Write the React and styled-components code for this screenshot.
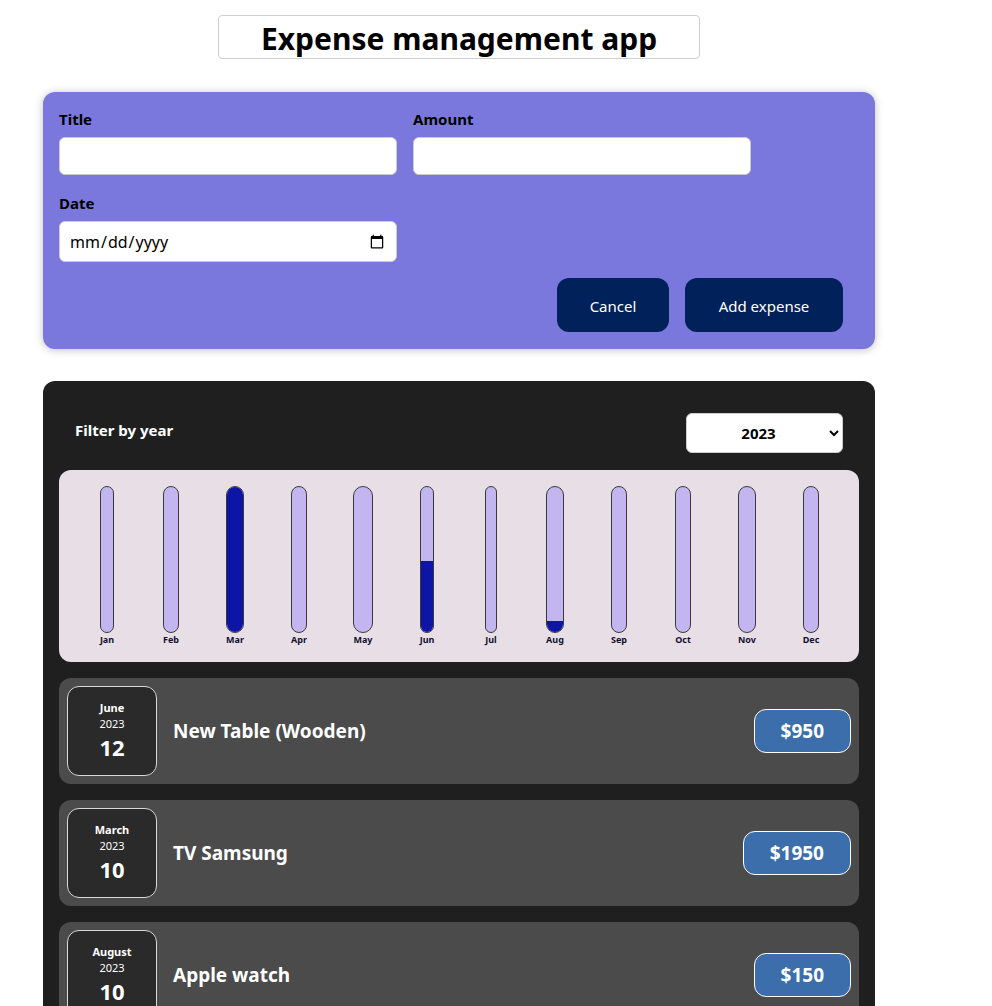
import React from 'react';
import styled, { createGlobalStyle } from 'styled-components';

const GlobalStyle = createGlobalStyle`
  body {
    margin: 0;
    background: #ffffff;
    font-family: "Noto Sans", "Open Sans", sans-serif;
  }
  * { box-sizing: border-box; }
`;

const Page = styled.div`
  width: 832px;
  margin-left: 43px;
  padding-top: 15px;
`;

const TitleBox = styled.h1`
  width: 482px;
  height: 44px;
  margin: 0 auto 33px;
  border: 1px solid #cfcfcf;
  border-radius: 4px;
  display: flex;
  align-items: center;
  justify-content: center;
  font-size: 30px;
  font-weight: 700;
  color: #000;
  padding-top: 3px;
`;

const FormCard = styled.form`
  background: #7a78dd;
  border-radius: 12px;
  box-shadow: 0 1px 8px rgba(0, 0, 0, 0.25);
  padding: 16px 32px 17px 16px;
`;

const Fields = styled.div`
  display: grid;
  grid-template-columns: 338px 338px;
  column-gap: 16px;
  row-gap: 17px;
`;

const Field = styled.div`
  display: flex;
  flex-direction: column;
`;

const Label = styled.label`
  font-weight: 700;
  font-size: 15px;
  color: #000;
  margin-bottom: 7px;
  line-height: 22px;
`;

const Input = styled.input`
  height: ${p => p.$tall ? '41px' : '38px'};
  border: 1px solid #cccccc;
  border-radius: 6px;
  background: #fff;
  font-family: inherit;
  font-size: 16px;
  padding: 0 9px;
  color: #000;
`;

const Actions = styled.div`
  display: flex;
  justify-content: flex-end;
  gap: 16px;
  margin-top: 16px;
`;

const Button = styled.button`
  height: 54px;
  width: ${p => p.$w}px;
  border: none;
  border-radius: 12px;
  background: #002159;
  color: #fff;
  font-family: inherit;
  font-size: 15px;
  padding-top: 2px;
`;

const ListCard = styled.div`
  margin-top: 32px;
  background: #1f1f1f;
  border-radius: 12px;
  padding: 32px 16px 16px;
  display: flex;
  flex-direction: column;
  gap: 16px;
`;

const FilterRow = styled.div`
  display: flex;
  justify-content: space-between;
  align-items: center;
  padding: 0 16px;
  margin-bottom: 1px;
`;

const FilterLabel = styled.span`
  color: #fff;
  font-weight: 700;
  font-size: 15px;
  margin-top: -6px;
`;

const YearSelect = styled.select`
  width: 157px;
  height: 40px;
  border-radius: 6px;
  border: 1px solid #ccc;
  background: #fff;
  font-family: inherit;
  font-weight: 700;
  font-size: 15px;
  text-align: center;
  text-align-last: center;
`;

const Chart = styled.div`
  background: #e8dfe6;
  border-radius: 12px;
  padding: 16px;
  height: 192px;
  display: flex;
`;

const BarColumn = styled.div`
  flex: 1;
  display: flex;
  justify-content: center;
`;

const BarStack = styled.div`
  display: flex;
  flex-direction: column;
  align-items: stretch;
`;

const BarTrack = styled.div`
  height: 149px;
  border: 1px solid #3a3a3a;
  border-radius: 12px;
  background: #c3b6f0;
  overflow: hidden;
  display: flex;
  flex-direction: column;
  justify-content: flex-end;
`;

const BarFill = styled.div`
  background: #0c15a5;
  width: 100%;
`;

const BarLabel = styled.div`
  font-size: 9px;
  font-weight: 700;
  color: #101030;
  text-align: center;
  margin-top: 1px;
  line-height: 12px;
`;

const Item = styled.div`
  background: #4b4b4b;
  border-radius: 12px;
  padding: 8px;
  display: flex;
  align-items: center;
  height: 106px;
`;

const DateBox = styled.div`
  width: 90px;
  height: 90px;
  border: 1px solid #d8d8d8;
  border-radius: 12px;
  background: #2a2a2a;
  color: #fff;
  display: flex;
  flex-direction: column;
  align-items: center;
  justify-content: center;
  flex-shrink: 0;
`;

const Month = styled.div`
  font-size: 11px;
  font-weight: 700;
  line-height: 15px;
`;

const Year = styled.div`
  font-size: 11px;
  line-height: 17px;
`;

const Day = styled.div`
  font-size: 22px;
  font-weight: 700;
  line-height: 30px;
`;

const ItemTitle = styled.h2`
  flex: 1;
  margin: 0 0 0 16px;
  color: #fff;
  font-size: 19px;
  font-weight: 700;
`;

const Price = styled.div`
  background: #3b6eaa;
  border: 1px solid #ffffff;
  border-radius: 12px;
  color: #fff;
  font-weight: 700;
  font-size: 19px;
  height: 44px;
  padding: 0 26px;
  display: flex;
  align-items: center;
`;

const months = ['Jan', 'Feb', 'Mar', 'Apr', 'May', 'Jun', 'Jul', 'Aug', 'Sep', 'Oct', 'Nov', 'Dec'];

const expenses = [
  { month: 'June', year: 2023, day: 12, title: 'New Table (Wooden)', amount: 950, m: 5 },
  { month: 'March', year: 2023, day: 10, title: 'TV Samsung', amount: 1950, m: 2 },
  { month: 'August', year: 2023, day: 10, title: 'Apple watch', amount: 150, m: 7 },
];

const App = () => {
  const totals = months.map((_, i) =>
    expenses.filter(e => e.m === i).reduce((s, e) => s + e.amount, 0)
  );
  const max = Math.max(...totals);

  return (
    <>
      <GlobalStyle />
      <Page>
        <TitleBox>Expense management app</TitleBox>

        <FormCard onSubmit={e => e.preventDefault()}>
          <Fields>
            <Field>
              <Label>Title</Label>
              <Input type="text" />
            </Field>
            <Field>
              <Label>Amount</Label>
              <Input type="number" />
            </Field>
            <Field>
              <Label>Date</Label>
              <Input type="date" $tall />
            </Field>
          </Fields>
          <Actions>
            <Button type="button" $w={112}>Cancel</Button>
            <Button type="submit" $w={158}>Add expense</Button>
          </Actions>
        </FormCard>

        <ListCard>
          <FilterRow>
            <FilterLabel>Filter by year</FilterLabel>
            <YearSelect defaultValue="2023">
              <option>2022</option>
              <option>2023</option>
              <option>2024</option>
            </YearSelect>
          </FilterRow>

          <Chart>
            {months.map((m, i) => (
              <BarColumn key={m}>
                <BarStack>
                  <BarTrack>
                    <BarFill style={{ height: `${max ? (totals[i] / max) * 100 : 0}%` }} />
                  </BarTrack>
                  <BarLabel>{m}</BarLabel>
                </BarStack>
              </BarColumn>
            ))}
          </Chart>

          {expenses.map(e => (
            <Item key={e.title}>
              <DateBox>
                <Month>{e.month}</Month>
                <Year>{e.year}</Year>
                <Day>{e.day}</Day>
              </DateBox>
              <ItemTitle>{e.title}</ItemTitle>
              <Price>${e.amount}</Price>
            </Item>
          ))}
        </ListCard>
      </Page>
    </>
  );
};

export default App;
